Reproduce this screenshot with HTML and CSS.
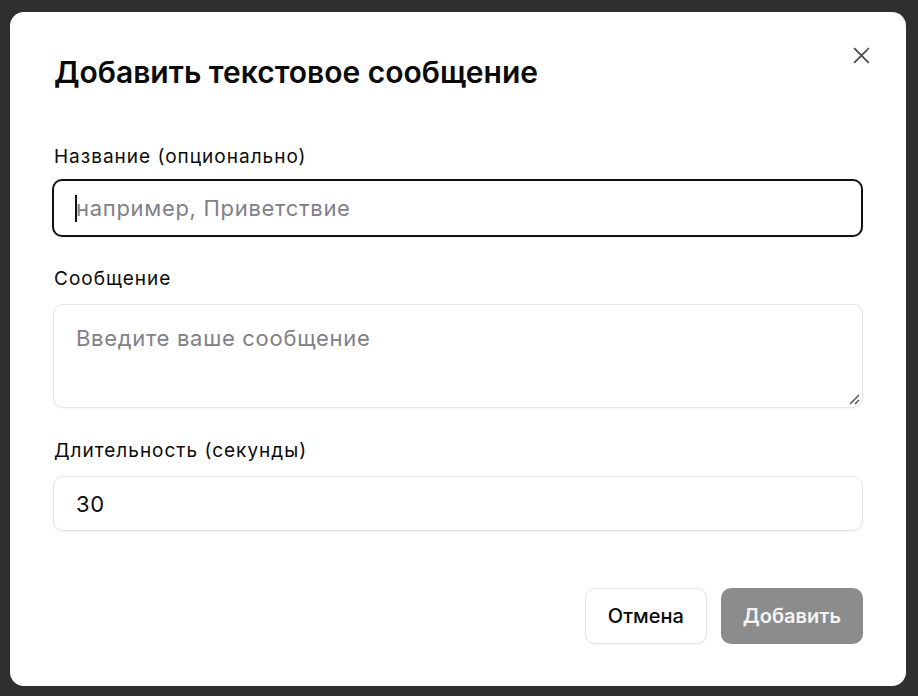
FILE: index.html
```html
<!DOCTYPE html>
<html lang="ru">
<head>
    <meta charset="UTF-8">
    <meta name="viewport" content="width=device-width, initial-scale=1.0">
    <title>Добавить текстовое сообщение</title>
    <link rel="stylesheet" href="styles.css">
</head>
<body>
    <div class="overlay">
        <div class="modal">
            <button class="close-btn" aria-label="Закрыть">
                <svg width="20" height="20" viewBox="0 0 20 20" fill="none" stroke="currentColor" stroke-width="2" stroke-linecap="square">
                    <path d="M2 2L18 18M18 2L2 18"/>
                </svg>
            </button>

            <h2 class="modal-title">Добавить текстовое сообщение</h2>

            <div class="form">
                <div class="field">
                    <label class="field-label">Название (опционально)</label>
                    <div class="input input-focus">
                        <span class="caret"></span>
                        <span class="placeholder">например, Приветствие</span>
                    </div>
                </div>

                <div class="field">
                    <label class="field-label">Сообщение</label>
                    <div class="input textarea">
                        <span class="placeholder">Введите ваше сообщение</span>
                        <svg class="resize-grip" width="12" height="12" viewBox="0 0 12 12" stroke="#555" stroke-width="1.5">
                            <path d="M2 11L11 2M7 11L11 7"/>
                        </svg>
                    </div>
                </div>

                <div class="field">
                    <label class="field-label">Длительность (секунды)</label>
                    <div class="input">
                        <span class="value">30</span>
                    </div>
                </div>
            </div>

            <div class="modal-footer">
                <button class="btn btn-outline">Отмена</button>
                <button class="btn btn-primary" disabled>Добавить</button>
            </div>
        </div>
    </div>
</body>
</html>
```

FILE: styles.css
```css
* {
    margin: 0;
    padding: 0;
    box-sizing: border-box;
}

body {
    font-family: Inter, 'Noto Sans', sans-serif;
    background: #2f2f2f;
    color: #0a0a0a;
    height: 696px;
    overflow: hidden;
}

.overlay {
    height: 100%;
    padding: 12px 12px 10px 10px;
}

.modal {
    position: relative;
    background: #fff;
    border-radius: 14px;
    height: 674px;
    width: 896px;
    padding: 43px 43px 42px 43px;
    display: flex;
    flex-direction: column;
}

.close-btn {
    position: absolute;
    top: 33px;
    right: 34px;
    width: 20px;
    height: 20px;
    border: none;
    background: none;
    color: #4a4a4a;
    cursor: pointer;
}

.close-btn svg {
    display: block;
    width: 17px;
    height: 17px;
    margin: 1px;
}

.modal-title {
    font-size: 30px;
    font-weight: 600;
    line-height: 34px;
    margin-left: 1px;
    margin-bottom: 57px;
}

.form {
    display: flex;
    flex-direction: column;
    gap: 32px;
}

.field {
    display: flex;
    flex-direction: column;
    gap: 14px;
}

.field-label {
    font-size: 19px;
    line-height: 22px;
    font-weight: 400;
    letter-spacing: 1px;
    margin-left: 1px;
}

.input {
    position: relative;
    height: 55px;
    border: 1px solid #e4e4e7;
    border-radius: 10px;
    box-shadow: 0 1px 2px rgba(0, 0, 0, 0.05);
    padding: 0 22px;
    display: flex;
    align-items: center;
    font-size: 22px;
    letter-spacing: 0.7px;
}

/* focused field: the 2px ring grows outward */
.input-focus {
    border: 2px solid #111;
    height: 58px;
    margin: -3px 0 -1px -1px;
    padding-left: 21px;
}

.textarea {
    height: 104px;
    align-items: flex-start;
    padding-top: 20px;
}

.placeholder {
    color: #80808a;
}

.value {
    color: #0a0a0a;
}

/* caret sits over the first letter of the placeholder */
.caret {
    width: 2px;
    height: 27px;
    background: #111;
    margin-right: -1px;
}

.resize-grip {
    position: absolute;
    right: 2px;
    bottom: 2px;
}

.modal-footer {
    margin-top: auto;
    display: flex;
    justify-content: flex-end;
    gap: 14px;
}

.btn {
    height: 56px;
    border-radius: 10px;
    font-family: inherit;
    font-size: 20px;
    padding: 0 22px;
    cursor: pointer;
}

.btn-outline {
    background: #fff;
    border: 1px solid #e4e4e7;
    box-shadow: 0 1px 2px rgba(0, 0, 0, 0.05);
    color: #0a0a0a;
    font-weight: 500;
}

.btn-primary {
    background: #8c8c8c;
    border: none;
    color: #f4f4f4;
    font-weight: 600;
}
```
